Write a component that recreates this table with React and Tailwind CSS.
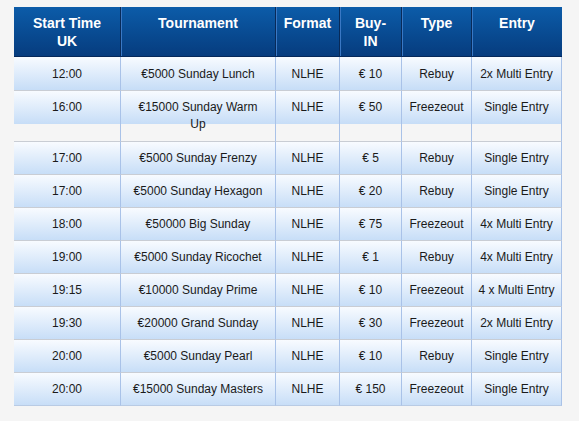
import React from "react";

const rows = [
  ["12:00", "€5000 Sunday Lunch", "NLHE", "€ 10", "Rebuy", "2x Multi Entry"],
  ["16:00", "€15000 Sunday Warm|Up", "NLHE", "€ 50", "Freezeout", "Single Entry"],
  ["17:00", "€5000 Sunday Frenzy", "NLHE", "€ 5", "Rebuy", "Single Entry"],
  ["17:00", "€5000 Sunday Hexagon", "NLHE", "€ 20", "Rebuy", "Single Entry"],
  ["18:00", "€50000 Big Sunday", "NLHE", "€ 75", "Freezeout", "4x Multi Entry"],
  ["19:00", "€5000 Sunday Ricochet", "NLHE", "€ 1", "Rebuy", "4x Multi Entry"],
  ["19:15", "€10000 Sunday Prime", "NLHE", "€ 10", "Freezeout", "4 x Multi Entry"],
  ["19:30", "€20000 Grand Sunday", "NLHE", "€ 30", "Freezeout", "2x Multi Entry"],
  ["20:00", "€5000 Sunday Pearl", "NLHE", "€ 10", "Rebuy", "Single Entry"],
  ["20:00", "€15000 Sunday Masters", "NLHE", "€ 150", "Freezeout", "Single Entry"],
];

const widths = ["w-[106px]", "w-[155px]", "w-[64px]", "w-[62px]", "w-[70px]", "w-[91px]"];

function Lines({ text }) {
  const parts = text.split("|");
  return parts.map((p, i) => (
    <React.Fragment key={i}>
      {p}
      {i < parts.length - 1 && <br />}
    </React.Fragment>
  ));
}

export default function App() {
  const headers = ["Start Time|UK", "Tournament", "Format", "Buy-|IN", "Type", "Entry"];

  return (
    <div className="w-full h-[421px] bg-[#f5f5f5] pt-[7px] pl-[14px] font-['Liberation_Sans',Arial,sans-serif]">
      <table className="table-fixed border-separate border-spacing-0 w-[548px]">
        <thead>
          <tr>
            {headers.map((h, i) => (
              <th
                key={i}
                className={
                  "align-top text-center text-white font-bold text-[14px] leading-[18px] pt-[7px] pb-[6px] border-b border-[#04285a] bg-[linear-gradient(to_bottom,#0c5ca9,#063c7e)] " +
                  widths[i] +
                  (i > 0 ? " border-l border-l-[#082a58] shadow-[inset_1px_0_0_#3a78c4]" : "")
                }
              >
                <Lines text={h} />
              </th>
            ))}
          </tr>
        </thead>
        <tbody>
          {rows.map((r, ri) => (
            <tr key={ri}>
              {r.map((c, ci) => (
                <td
                  key={ci}
                  className={
                    "align-top text-center text-[12px] leading-[17px] text-[#1a1a1a] bg-[linear-gradient(to_bottom,#f8fbff,#c6ddf7)] bg-no-repeat bg-[length:100%_33px] " +
                    (ri === 0 ? "pt-[9px] " : "pt-[8px] border-t border-t-[#c9cdd4] ") +
                    (ri === 1 ? "pb-[8px] " : "pb-[7px] ") +
                    (ci > 0 ? "border-l border-l-[#a9c2e8] " : "") +
                    (ci === 5 ? "border-r border-r-[#a9c2e8] " : "") +
                    (ri === rows.length - 1 ? "border-b border-b-[#b9cbe4]" : "")
                  }
                >
                  <Lines text={c} />
                </td>
              ))}
            </tr>
          ))}
        </tbody>
      </table>
    </div>
  );
}
